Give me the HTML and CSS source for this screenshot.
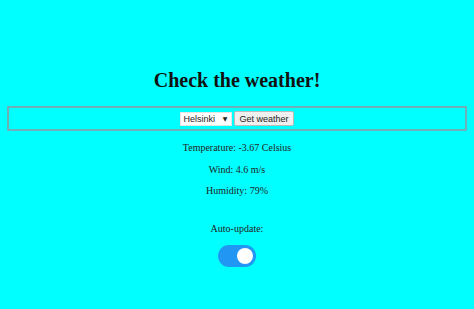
FILE: index.html
```html
<!DOCTYPE html>
<html>
  <head>
    <meta charset="UTF-8">
    <title>Check the weather!</title>
    <link rel="stylesheet" href="styles.css">
  </head>
  <body>
    <h1>Check the weather!</h1>
    <form class="controls" id="weatherForm">
      <span class="select-box">
        <select class="city" id="city">
          <option>Helsinki</option>
          <option>Tampere</option>
          <option>Turku</option>
        </select>
        <span class="arrow">&#9660;</span>
      </span>
      <button type="submit" class="fetch">Get weather</button>
    </form>
    <div class="readings">
      <p>Temperature: -3.67 Celsius</p>
      <p>Wind: 4.6 m/s</p>
      <p>Humidity: 79%</p>
    </div>
    <div class="auto">
      <p>Auto-update:</p>
      <label class="switch">
        <input type="checkbox" checked>
        <span class="slider"></span>
      </label>
    </div>
  </body>
</html>
```

FILE: styles.css
```css
body {
  background-color: #00ffff;
  font-family: "Liberation Serif", "Times New Roman", serif;
  margin: 0;
  padding: 0;
  text-align: center;
  color: #000;
}

h1 {
  font-size: 20px;
  line-height: 23px;
  font-weight: bold;
  margin: 0;
  padding: 69px 0 14px;
  color: #111;
}

.controls {
  margin: 0 7px;
  border: 2px solid #6fb0b8;
  height: 21px;
  display: flex;
  align-items: center;
  justify-content: center;
  gap: 2px;
}

.select-box {
  display: flex;
  align-items: center;
  height: 14px;
  width: 52px;
  box-sizing: border-box;
  border: 1px solid #e4e4e4;
  background: #fff;
  padding: 0 4px 0 2px;
}

.city {
  appearance: none;
  -webkit-appearance: none;
  flex: 1;
  min-width: 0;
  font-family: "Liberation Sans", Arial, sans-serif;
  font-size: 9px;
  height: 12px;
  padding: 0;
  border: none;
  background: transparent;
  color: #222;
}

.arrow {
  font-family: "DejaVu Sans", sans-serif;
  font-size: 6px;
  color: #222;
}

.fetch {
  font-family: "Liberation Sans", Arial, sans-serif;
  font-size: 9px;
  height: 15px;
  padding: 0 4px;
  border: 1px solid #bbb;
  border-radius: 2px;
  background: #efefef;
  color: #222;
}

.readings {
  padding-top: 11px;
}

.readings p,
.auto p {
  font-size: 10px;
  line-height: 12px;
  margin: 0 0 9.5px;
  color: #222;
}

.auto {
  padding-top: 16px;
}

.auto p {
  margin-bottom: 10px;
}

.switch {
  display: inline-block;
  position: relative;
  width: 38px;
  height: 22px;
}

.switch input {
  opacity: 0;
  width: 0;
  height: 0;
}

.slider {
  position: absolute;
  inset: 0;
  background-color: #2196f3;
  border-radius: 11px;
}

.slider::before {
  content: "";
  position: absolute;
  width: 16px;
  height: 16px;
  right: 3px;
  top: 3px;
  background: #fff;
  border-radius: 50%;
}
```
